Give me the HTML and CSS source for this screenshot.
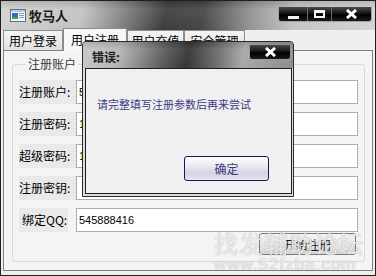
FILE: index.html
```html
<!DOCTYPE html>
<html lang="zh-CN">
<head>
    <meta charset="UTF-8">
    <title>牧马人</title>
    <link rel="stylesheet" href="styles.css">
</head>
<body>

    <div class="window">

        <!-- Title bar -->
        <div class="titlebar">
            <svg class="app-icon" width="16" height="13" viewBox="0 0 16 13">
                <rect x="0.5" y="0.5" width="15" height="12" fill="#f4f7fb" stroke="#5b6f86"/>
                <rect x="1" y="1" width="14" height="2" fill="#b9c9de"/>
                <rect x="2" y="4" width="6" height="4" fill="#2f6fb3"/>
                <rect x="2" y="8" width="6" height="2" fill="#4aa34a"/>
                <rect x="9" y="4" width="5" height="1" fill="#8a96a4"/>
                <rect x="9" y="6" width="5" height="1" fill="#8a96a4"/>
                <rect x="9" y="8" width="5" height="1" fill="#8a96a4"/>
            </svg>
            <span class="app-title">牧马人</span>
            <div class="caption">
                <div class="cap cap-min"><span class="glyph-min"></span></div>
                <div class="cap cap-max"><span class="glyph-max"></span></div>
                <div class="cap cap-close">
                    <svg width="13" height="10" viewBox="0 0 13 10"><path d="M2 1 L11 9 M11 1 L2 9" stroke="#fff" stroke-width="3"/></svg>
                </div>
            </div>
        </div>

        <!-- Tabs -->
        <div class="tabs">
            <div class="tab tab-login">用户登录</div>
            <div class="tab tab-register active">用户注册</div>
            <div class="tab tab-charge">用户充值</div>
            <div class="tab tab-safe">安全管理</div>
        </div>

        <!-- Register panel -->
        <div class="panel">
            <fieldset class="group">
                <legend>注册账户</legend>
                <div class="form">
                    <label class="label">注册账户:</label>
                    <input class="field" type="text" value="545888416">
                    <label class="label">注册密码:</label>
                    <input class="field" type="text" value="123456">
                    <label class="label">超级密码:</label>
                    <input class="field" type="text" value="123456">
                    <label class="label">注册密钥:</label>
                    <input class="field" type="text" value="">
                    <label class="label short">绑定QQ:</label>
                    <input class="field" type="text" value="545888416">
                </div>
                <div class="actions">
                    <button class="btn-register">开始注册</button>
                </div>
            </fieldset>
        </div>

        <!-- Error dialog -->
        <div class="dialog">
            <div class="dialog-title">
                <span class="dialog-caption">错误:</span>
                <div class="dialog-close">
                    <svg width="13" height="10" viewBox="0 0 13 10"><path d="M2 1 L11 9 M11 1 L2 9" stroke="#fff" stroke-width="3"/></svg>
                </div>
            </div>
            <div class="dialog-body">
                <p class="dialog-message">请完整填写注册参数后再来尝试</p>
                <button class="btn-ok">确定</button>
            </div>
        </div>

        <!-- Watermark -->
        <div class="watermark">
            <div class="wm-big">找发辅助论坛</div>
            <div class="wm-small">www.52fzba.com</div>
        </div>

    </div>

</body>
</html>
```

FILE: styles.css
```css
/* Reset */
* {
    box-sizing: border-box;
    margin: 0;
    padding: 0;
}

body {
    width: 376px;
    height: 276px;
    overflow: hidden;
    background: #ffffff;
    font-family: "Liberation Sans", "Noto Sans CJK SC", sans-serif;
    font-size: 12px;
    color: #000;
}

/* Main window */
.window {
    position: relative;
    width: 376px;
    height: 276px;
    display: flex;
    flex-direction: column;
    border: 1px solid #1f1f1f;
    background: #efefef;
    padding-bottom: 4px;
}

.titlebar {
    height: 29px;
    display: flex;
    align-items: flex-start;
    background:
        linear-gradient(rgba(0, 0, 0, 0.12), rgba(255, 255, 255, 0.08) 30%, rgba(0, 0, 0, 0) 100%),
        linear-gradient(100deg, #d2d2d2 0%, #c2c2c2 22%, #7a7a7a 34%, #3c3c3c 44%, #454545 54%, #8f8f8f 66%, #c4c4c4 78%, #d4d4d4 100%);
}

.app-icon {
    margin: 8px 3px 0 9px;
}

.app-title {
    margin-top: 7px;
    font-family: "Noto Sans CJK SC", sans-serif;
    font-size: 13px;
    line-height: 16px;
    font-weight: bold;
    color: #1c1c1c;
}

.caption {
    margin: 6px 3px 0 auto;
    display: flex;
    height: 15px;
    border: 1px solid #a0a0a0;
    border-top: none;
    border-radius: 0 0 3px 3px;
    background: linear-gradient(#4a4a4a, #161616 45%, #000 55%, #1a1a1a);
}

.cap {
    height: 100%;
    display: flex;
    align-items: center;
    justify-content: center;
}

.cap-min {
    width: 28px;
}

.cap-max {
    width: 25px;
    border-left: 1px solid #6a6a6a;
    border-right: 1px solid #6a6a6a;
}

.cap-close {
    width: 39px;
}

.glyph-min {
    width: 11px;
    height: 3px;
    margin-top: 6px;
    background: #f2f2f2;
}

.glyph-max {
    width: 11px;
    height: 8px;
    border: 2px solid #f2f2f2;
    border-top-width: 3px;
}

/* Tabs */
.tabs {
    height: 20px;
    display: flex;
    align-items: flex-end;
    padding-left: 2px;
    position: relative;
    z-index: 1;
}

.tab {
    height: 20px;
    display: flex;
    align-items: center;
    justify-content: center;
    font-family: "Noto Sans CJK SC", sans-serif;
    font-size: 12px;
    color: #000;
    border: 1px solid #8c8c8c;
    border-bottom: none;
    background: linear-gradient(#f4f4f4, #e2e2e2);
}

.tab-login {
    width: 60px;
}

.tab-register {
    width: 64px;
}

.tab-charge {
    width: 57px;
}

.tab-safe {
    width: 61px;
}

.tab.active {
    height: 23px;
    margin-bottom: -1px;
    padding-bottom: 2px;
    background: #f7f7f7;
}

/* Panel */
.panel {
    flex: 1;
    margin: 0 2px 0 2px;
    border: 1px solid #808080;
    background: #f4f4f4;
    padding: 6px 7px 8px 8px;
}

.group {
    border: 1px solid #d3dbe0;
    border-radius: 3px;
    padding: 0 6px 6px 6px;
}

.group legend {
    margin-left: 7px;
    padding: 0 2px;
    font-family: "Noto Sans CJK SC", sans-serif;
    font-size: 12px;
    line-height: 14px;
    color: #3a3a3a;
}

.form {
    display: grid;
    grid-template-columns: 57px 1fr;
    row-gap: 8px;
    margin-top: 9px;
}

.label {
    height: 24px;
    line-height: 24px;
    background: #e9e9e9;
    font-family: "Noto Sans CJK SC", sans-serif;
    font-size: 12px;
    color: #000;
}

.label.short {
    width: 49px;
    padding-left: 3px;
}

.field {
    height: 24px;
    border: 1px solid #a7aeb6;
    background: #fff;
    padding-left: 2px;
    font-family: "Liberation Sans", sans-serif;
    font-size: 11px;
    color: #000;
    outline: none;
}

.actions {
    display: flex;
    justify-content: flex-end;
    margin-top: 1px;
    padding-right: 2px;
}

.btn-register {
    width: 97px;
    height: 22px;
    border: 1px solid #7a7a7a;
    border-radius: 3px;
    background: linear-gradient(#f7f7f7, #e6e6e6 50%, #d6d6d6);
    font-family: "Noto Sans CJK SC", sans-serif;
    font-size: 12px;
    color: #1a1a1a;
}

/* Error dialog */
.dialog {
    position: absolute;
    left: 81px;
    top: 40px;
    width: 212px;
    height: 156px;
    display: flex;
    flex-direction: column;
    border: 1px solid #2b2b2b;
    border-radius: 4px 4px 0 0;
    background: #dcdcdc;
    padding: 0 1px 2px 2px;
    z-index: 2;
}

.dialog-title {
    height: 26px;
    margin: 0 -1px 0 -2px;
    display: flex;
    align-items: flex-start;
    border-radius: 3px 3px 0 0;
    background:
        linear-gradient(rgba(0, 0, 0, 0.1), rgba(255, 255, 255, 0.06) 30%, rgba(0, 0, 0, 0) 100%),
        linear-gradient(100deg, #c8c8c8 0%, #b4b4b4 18%, #5e5e5e 38%, #353535 50%, #6e6e6e 64%, #a8a8a8 76%, #8c8c8c 100%);
}

.dialog-caption {
    margin: 7px 0 0 9px;
    font-family: "Noto Sans CJK SC", sans-serif;
    font-size: 12px;
    line-height: 16px;
    font-weight: bold;
    color: #202020;
}

.dialog-close {
    margin: 3px 2px 0 auto;
    width: 42px;
    height: 15px;
    display: flex;
    align-items: center;
    justify-content: center;
    border: 1px solid #9a9a9a;
    border-top: none;
    border-radius: 0 0 3px 3px;
    background: linear-gradient(#4a4a4a, #161616 45%, #000 55%, #1a1a1a);
}

.dialog-body {
    flex: 1;
    display: flex;
    flex-direction: column;
    border: 1px solid #1e1e1e;
    background: #f0f0f0;
    padding: 28px 22px 12px 11px;
}

.dialog-message {
    font-family: "Noto Sans CJK SC", sans-serif;
    font-size: 11px;
    line-height: 14px;
    color: #3a3a84;
}

.btn-ok {
    margin-top: auto;
    align-self: flex-end;
    width: 85px;
    height: 25px;
    border: 1px solid #16165c;
    border-radius: 3px;
    background: linear-gradient(#fdfdfd 0%, #ededf3 35%, #d2d3e4 70%, #e6e6ef 100%);
    font-family: "Noto Sans CJK SC", sans-serif;
    font-size: 12px;
    color: #3b3b75;
}

/* Site watermark */
.watermark {
    position: absolute;
    left: 213px;
    top: 228px;
    z-index: 3;
    color: rgba(255, 255, 255, 0.8);
    text-shadow: 0 0 1px rgba(110, 110, 110, 0.7);
    pointer-events: none;
}

.wm-big {
    font-family: "Noto Sans CJK SC", sans-serif;
    font-size: 24px;
    line-height: 28px;
    letter-spacing: 1px;
}

.wm-small {
    font-family: "Liberation Sans", sans-serif;
    font-size: 17px;
    line-height: 16px;
    letter-spacing: 1px;
}
```
